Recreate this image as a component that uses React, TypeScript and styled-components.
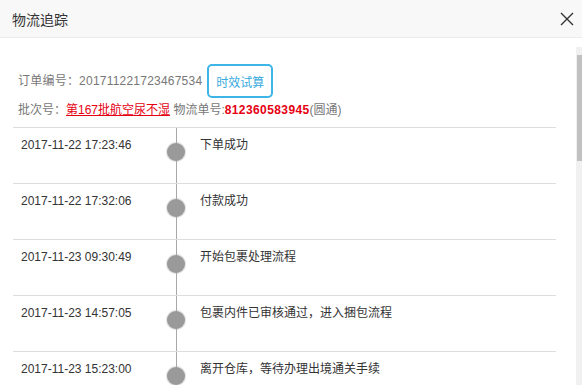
import React, { useEffect, useRef, useState } from "react";
import styled, { createGlobalStyle } from "styled-components";

const GlobalStyle = createGlobalStyle`
  html, body {
    margin: 0;
    padding: 0;
    background: #fff;
  }
  body {
    font-family: "Liberation Sans", Arial, "Noto Sans CJK SC", sans-serif;
    font-size: 12px;
    color: #333;
  }
`;

const Modal = styled.div`
  width: 582px;
  height: 385px;
  display: flex;
  flex-direction: column;
  background: #fff;
  overflow: hidden;
`;

const Header = styled.div`
  height: 37px;
  flex-shrink: 0;
  display: flex;
  align-items: center;
  justify-content: space-between;
  padding: 0 7px 0 12px;
  background: #f8f8f8;
  border-bottom: 1px solid #ececec;
`;

const Title = styled.h3`
  margin: 0;
  font-size: 14px;
  font-weight: normal;
  color: #333;
`;

const CloseButton = styled.button`
  width: 16px;
  height: 16px;
  padding: 0;
  border: none;
  background: none;
  display: flex;
  align-items: center;
  justify-content: center;
  cursor: pointer;
`;

const Body = styled.div`
  flex: 1;
  min-height: 0;
  margin-top: 9px;
  position: relative;
  display: flex;
  flex-direction: column;
`;

const Scroller = styled.div`
  flex: 1;
  min-height: 0;
  overflow-y: auto;
  padding: 0 26px 0 13px;
  scrollbar-width: none;

  &::-webkit-scrollbar {
    display: none;
  }
`;

const ScrollTrack = styled.div`
  position: absolute;
  top: 0;
  right: 0;
  bottom: 0;
  width: 6px;
  background: #f1f1f1;
`;

const ScrollThumb = styled.div`
  position: absolute;
  left: 1px;
  right: 0;
  background: #c1c1c1;
`;

const Info = styled.div`
  padding: 17px 0 7px 5px;
  color: #777;
`;

const InfoLine = styled.div<{ $gap?: number; $top?: number }>`
  display: flex;
  align-items: center;
  gap: ${({ $gap }) => $gap ?? 0}px;
  margin-top: ${({ $top }) => $top ?? 0}px;
  line-height: 20px;
`;

const OrderNo = styled.span`
  letter-spacing: 0.22px;
`;

const TryButton = styled.button`
  width: 66px;
  height: 34px;
  padding: 0;
  border: 2px solid #3db5e6;
  border-radius: 5px;
  background: #fff;
  color: #36a9dd;
  font-family: inherit;
  font-size: 12px;
  cursor: pointer;
`;

const BatchLink = styled.a`
  color: #e60012;
  text-decoration: underline;
  cursor: pointer;
`;

const TrackNo = styled.span`
  color: #e60012;
  font-weight: bold;
  letter-spacing: 0.4px;
`;

const List = styled.div`
  min-height: 972px;
`;

const Row = styled.div`
  display: grid;
  grid-template-columns: 145px 36px 1fr;
  height: 56px;
  box-sizing: border-box;
  border-top: 1px solid #dddddd;
`;

const Time = styled.div`
  padding: 8px 0 0 8px;
  line-height: 18px;
  color: #333;
`;

const Axis = styled.div`
  position: relative;

  &::before {
    content: "";
    position: absolute;
    left: 18px;
    top: 0;
    bottom: 0;
    width: 1px;
    background: #a8a8a8;
  }
`;

const Dot = styled.span`
  position: absolute;
  left: 9px;
  top: 15px;
  width: 18px;
  height: 18px;
  border-radius: 50%;
  background: #9a9a9a;
  box-shadow: 0 0 1px 1px rgba(154, 154, 154, 0.35);
`;

const Event = styled.div`
  padding: 8px 0 0 6px;
  line-height: 18px;
  color: #333;
`;

const events = [
  { time: "2017-11-22 17:23:46", text: "下单成功" },
  { time: "2017-11-22 17:32:06", text: "付款成功" },
  { time: "2017-11-23 09:30:49", text: "开始包裹处理流程" },
  { time: "2017-11-23 14:57:05", text: "包裹内件已审核通过，进入捆包流程" },
  { time: "2017-11-23 15:23:00", text: "离开仓库，等待办理出境通关手续" },
];

const CloseIcon = () => (
  <svg width="14" height="14" viewBox="0 0 14 14">
    <path d="M1 1 L13 13 M13 1 L1 13" stroke="#333" strokeWidth="1.4" fill="none" />
  </svg>
);

// scrollbar starts below an 8px "button" area, like the original page
const BUTTON_SPACE = 8;

export default function App() {
  const scrollRef = useRef<HTMLDivElement>(null);
  const [thumb, setThumb] = useState({ top: BUTTON_SPACE, height: 106 });

  const measure = () => {
    const el = scrollRef.current;
    if (!el) return;
    const track = el.clientHeight - BUTTON_SPACE;
    const height = Math.round((track * el.clientHeight) / el.scrollHeight);
    const top = BUTTON_SPACE + Math.round((track * el.scrollTop) / el.scrollHeight);
    setThumb({ top, height });
  };

  useEffect(() => {
    measure();
  }, []);

  return (
    <>
      <GlobalStyle />
      <Modal>
        <Header>
          <Title>物流追踪</Title>
          <CloseButton aria-label="关闭">
            <CloseIcon />
          </CloseButton>
        </Header>
        <Body>
          <Scroller ref={scrollRef} onScroll={measure}>
            <Info>
              <InfoLine $gap={5}>
                <OrderNo>订单编号：201711221723467534</OrderNo>
                <TryButton>时效试算</TryButton>
              </InfoLine>
              <InfoLine $top={2}>
                <span>批次号：</span>
                <BatchLink>第167批航空尿不湿</BatchLink>
                <span>&nbsp;物流单号:</span>
                <TrackNo>812360583945</TrackNo>
                <span>(圆通)</span>
              </InfoLine>
            </Info>
            <List>
              {events.map((e) => (
                <Row key={e.time}>
                  <Time>{e.time}</Time>
                  <Axis>
                    <Dot />
                  </Axis>
                  <Event>{e.text}</Event>
                </Row>
              ))}
            </List>
          </Scroller>
          <ScrollTrack>
            <ScrollThumb style={{ top: thumb.top, height: thumb.height }} />
          </ScrollTrack>
        </Body>
      </Modal>
    </>
  );
}
